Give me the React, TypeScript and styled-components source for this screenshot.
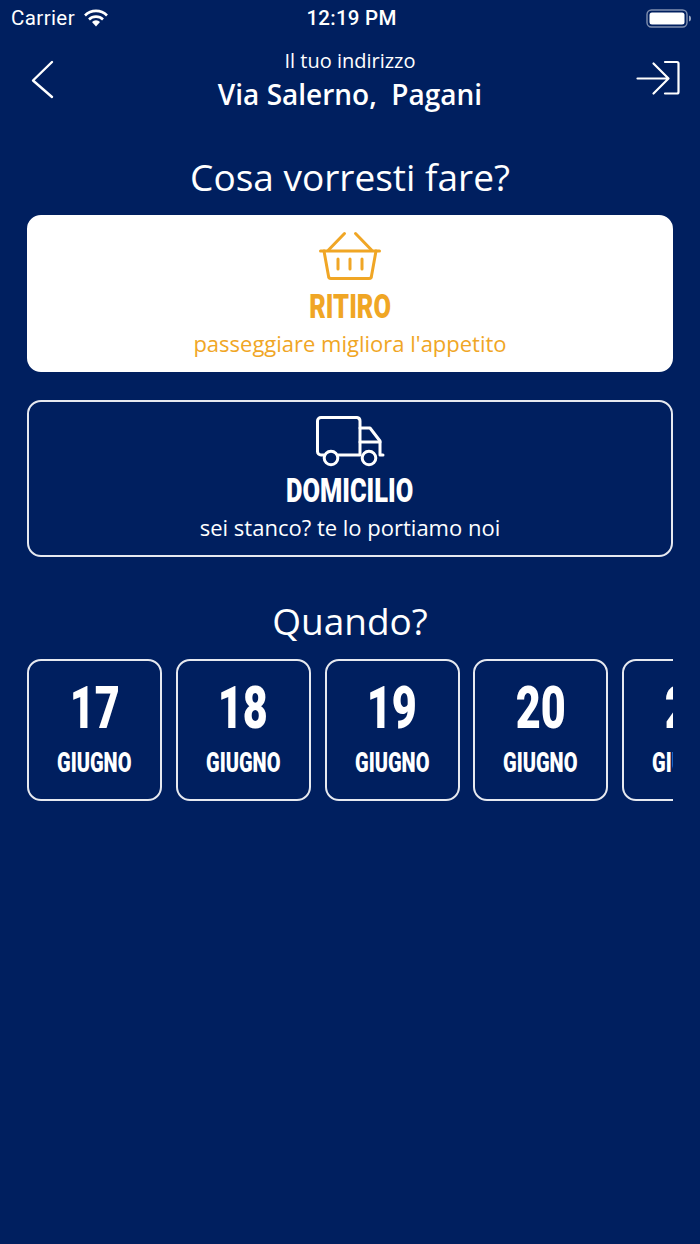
import * as React from 'react';
import styled, { createGlobalStyle } from 'styled-components';

const NAVY = '#001f5f';
const ORANGE = '#f0a625';

const GlobalStyle = createGlobalStyle`
    html, body {
        margin: 0;
        padding: 0;
        background: ${NAVY};
    }
    * { box-sizing: border-box; }
`;

const Page = styled.div`
    width: 700px;
    height: 1244px;
    overflow: hidden;
    background: ${NAVY};
    color: #fff;
    font-family: "Open Sans", "Liberation Sans", sans-serif;
`;

const StatusBar = styled.div`
    height: 36px;
    padding: 0 8px 0 11px;
    display: grid;
    grid-template-columns: 1fr auto 1fr;
    align-items: center;
    font-family: Roboto, "Liberation Sans", sans-serif;
    font-size: 20.5px;
`;

const Carrier = styled.div`
    display: flex;
    align-items: center;
    gap: 9px;
    font-weight: 400;
    letter-spacing: 0.4px;
`;

const Clock = styled.div`
    font-weight: 500;
    letter-spacing: 0.25px;
`;

const Battery = styled.svg`
    justify-self: end;
`;

const Header = styled.div`
    height: 78px;
    padding: 0 20px;
    display: grid;
    grid-template-columns: 1fr auto 1fr;
    align-items: start;
`;

const Address = styled.div`
    text-align: center;
    padding-top: 12px;
`;

const AddressLabel = styled.div`
    font-size: 20px;
    line-height: 26px;
    font-weight: 400;
`;

const AddressValue = styled.div`
    font-size: 28px;
    line-height: 38px;
    font-weight: 600;
    white-space: pre;
    margin-top: 1px;
`;

const BackIcon = styled.svg`
    display: block;
    margin: 24px 0 0 10px;
`;

const LoginIcon = styled.svg`
    display: block;
    margin-top: 24px;
    justify-self: end;
`;

const Heading = styled.h2<{ $top: number }>`
    margin: ${p => p.$top}px 0 0;
    font-size: 37px;
    line-height: 46px;
    font-weight: 500;
    text-align: center;
`;

const Options = styled.div`
    padding: 15px 27px 0;
    display: flex;
    flex-direction: column;
    gap: 28px;
`;

const OptionCard = styled.div<{ $active?: boolean }>`
    height: 157px;
    border-radius: 14px;
    border: 2px solid ${p => (p.$active ? '#fff' : '#e6e9f0')};
    background: ${p => (p.$active ? '#fff' : 'transparent')};
    color: ${p => (p.$active ? ORANGE : '#fff')};
    display: flex;
    flex-direction: column;
    align-items: center;
    padding-top: ${p => (p.$active ? 14 : 13)}px;
`;

const OptionIcon = styled.svg`
    display: block;
    overflow: visible;
`;

const OptionTitle = styled.div`
    font-family: Roboto, "Liberation Sans", sans-serif;
    font-weight: 900;
    font-size: 33px;
    line-height: 38px;
    margin-top: 7px;
    transform: scaleX(0.77);
`;

const OptionText = styled.div`
    font-size: 22px;
    line-height: 30px;
    margin-top: 2px;
`;

const Days = styled.div`
    margin: 15px 27px 0;
    display: flex;
    gap: 13.75px;
    overflow: hidden;
`;

const DayCard = styled.div`
    flex: 0 0 135px;
    height: 142px;
    border: 2px solid #e6e9f0;
    border-radius: 14px;
    display: flex;
    flex-direction: column;
    align-items: center;
    font-family: Roboto, "Liberation Sans", sans-serif;
    font-weight: 900;
`;

const DayNumber = styled.div`
    font-size: 60px;
    line-height: 60px;
    margin-top: 17px;
    transform: scaleX(0.72);
`;

const DayMonth = styled.div`
    font-size: 27px;
    line-height: 30px;
    margin-top: 10px;
    transform: scaleX(0.74);
`;

const days = ['17', '18', '19', '20', '21'];

const App: React.FC = () => {
    return (
        <Page>
            <GlobalStyle />
            <StatusBar>
                <Carrier>
                    Carrier
                    <svg width="24" height="18" viewBox="0 0 24 18">
                        <path d="M1 6.500a15.500 15.500 0 0 1 22 0" fill="none" stroke="#fff" strokeWidth="2.600" />
                        <path d="M5 10.500a10 10 0 0 1 14 0" fill="none" stroke="#fff" strokeWidth="2.600" />
                        <path d="M8 13a5.600 5.600 0 0 1 8 0l-4 4.500z" fill="#fff" />
                    </svg>
                </Carrier>
                <Clock>12:19 PM</Clock>
                <Battery width="46" height="20" viewBox="0 0 46 20">
                    <rect x="1" y="2" width="40" height="17" rx="4.500" fill="none" stroke="#fff" strokeOpacity="0.5" strokeWidth="1.400" />
                    <rect x="3.500" y="4.500" width="35" height="12" rx="2.500" fill="#fff" />
                    <path d="M43 7.500c1.500.4 2 1.500 2 3s-.5 2.600-2 3z" fill="#fff" fillOpacity="0.6" />
                </Battery>
            </StatusBar>
            <Header>
                <BackIcon width="26" height="40" viewBox="0 0 26 40">
                    <path d="M22 2 3 20.500 22 37" fill="none" stroke="#fff" strokeWidth="2.400" strokeLinecap="round" strokeLinejoin="round" />
                </BackIcon>
                <Address>
                    <AddressLabel>Il tuo indirizzo</AddressLabel>
                    <AddressValue>Via Salerno,  Pagani</AddressValue>
                </Address>
                <LoginIcon width="44" height="36" viewBox="0 0 44 36">
                    <path d="M1.500 18.500H31M17.500 3.500l15 15-15 15" fill="none" stroke="#fff" strokeWidth="2.200" strokeLinecap="round" strokeLinejoin="round" />
                    <path d="M29 2h12a1.500 1.500 0 0 1 1.500 1.500v28.500a1.500 1.500 0 0 1-1.500 1.500H29" fill="none" stroke="#fff" strokeWidth="2.200" strokeLinecap="round" />
                </LoginIcon>
            </Header>
            <Heading $top={40}>Cosa vorresti fare?</Heading>
            <Options>
                <OptionCard $active>
                    <OptionIcon width="62" height="50" viewBox="0 0 62 50" fill="none" stroke="currentColor" strokeWidth="3" strokeLinecap="round" strokeLinejoin="round">
                        <path d="M1.500 20h59" />
                        <path d="M5 20l4.500 25a2.500 2.500 0 0 0 2.500 2.500h38a2.500 2.500 0 0 0 2.500-2.500l4.500-25" />
                        <path d="M9.500 19 25.500 2.500M52.500 19 36.500 2.500" />
                        <path d="M19 28v10M31 28v10M43 28v10" />
                    </OptionIcon>
                    <OptionTitle>RITIRO</OptionTitle>
                    <OptionText>passeggiare migliora l'appetito</OptionText>
                </OptionCard>
                <OptionCard>
                    <OptionIcon width="68" height="50" viewBox="0 -1 68 50" fill="none" stroke="currentColor" strokeWidth="3" strokeLinecap="round" strokeLinejoin="round">
                        <path d="M8 39H5a3.500 3.500 0 0 1-3.500-3.500V5A3.500 3.500 0 0 1 5 1.500h36A3.500 3.500 0 0 1 44 5v34H22" />
                        <path d="M44 12h10l10 13V39h3" />
                        <path d="M44 26h20" />
                        <circle cx="15" cy="42" r="6.800" />
                        <circle cx="53" cy="42" r="6.800" />
                    </OptionIcon>
                    <OptionTitle>DOMICILIO</OptionTitle>
                    <OptionText>sei stanco? te lo portiamo noi</OptionText>
                </OptionCard>
            </Options>
            <Heading $top={41}>Quando?</Heading>
            <Days>
                {days.map(day => (
                    <DayCard key={day}>
                        <DayNumber>{day}</DayNumber>
                        <DayMonth>GIUGNO</DayMonth>
                    </DayCard>
                ))}
            </Days>
        </Page>
    );
};

export default App;
